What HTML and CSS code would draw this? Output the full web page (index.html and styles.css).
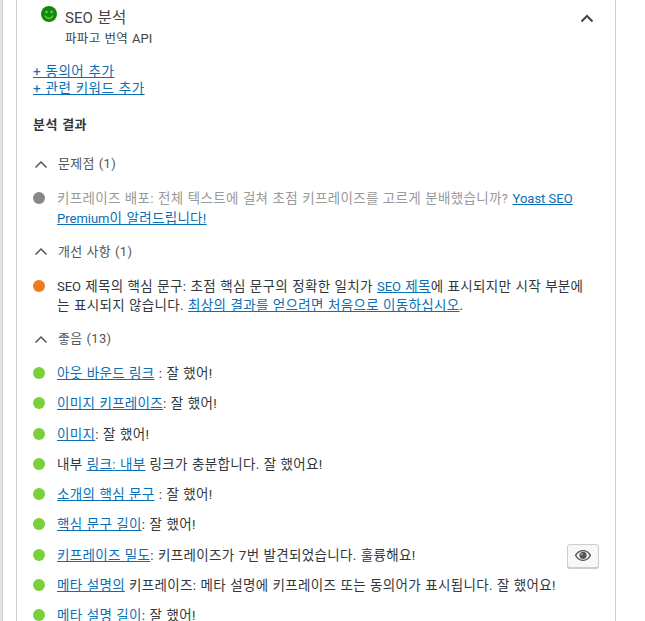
FILE: index.html
```html
<!DOCTYPE html>
<html lang="ko">
<head>
<meta charset="utf-8">
<title>SEO 분석</title>
<link rel="stylesheet" href="styles.css">
</head>
<body>
<div class="stripe"></div>
<main class="panel">
  <header class="head">
    <svg class="smile" viewBox="0 0 16 16" aria-hidden="true"><circle cx="8" cy="8" r="8" fill="#0f8a0f"/><circle cx="5.400" cy="6" r="1.200" fill="#7ad03a"/><circle cx="10.600" cy="6" r="1.200" fill="#7ad03a"/><path d="M4 9.400c1 2 2.400 2.900 4 2.900s3-.9 4-2.900" fill="none" stroke="#7ad03a" stroke-width="1.200"/></svg>
    <div class="titles">
      <h2 class="title"><span class="lat">SEO</span> 분석</h2>
      <div class="sub">파파고 번역 <span class="lat">API</span></div>
    </div>
    <svg class="chev big" viewBox="0 0 14 9" aria-hidden="true"><path d="M1.500 7.500 7 2l5.500 5.500" fill="none" stroke="#444" stroke-width="2"/></svg>
  </header>
  <div class="adds">
    <a href="#">+ 동의어 추가</a>
    <a href="#">+ 관련 키워드 추가</a>
  </div>
  <h3 class="results">분석 결과</h3>

  <div class="group first"><svg class="chev" viewBox="0 0 14 9" aria-hidden="true"><path d="M1.500 7.500 7 2l5.500 5.500" fill="none" stroke="#555" stroke-width="1.500"/></svg><span>문제점 (1)</span></div>
  <ul class="list">
    <li class="item muted"><i class="dot grey"></i><p>키프레이즈 배포: 전체 텍스트에 걸쳐 초점 키프레이즈를 고르게 분배했습니까? <a href="#"><span class="lat">Yoast SEO Premium</span>이 알려드립니다!</a></p></li>
  </ul>

  <div class="group"><svg class="chev" viewBox="0 0 14 9" aria-hidden="true"><path d="M1.500 7.500 7 2l5.500 5.500" fill="none" stroke="#555" stroke-width="1.500"/></svg><span>개선 사항 (1)</span></div>
  <ul class="list">
    <li class="item"><i class="dot orange"></i><p><span class="lat">SEO</span> 제목의 핵심 문구: 초점 핵심 문구의 정확한 일치가 <a href="#"><span class="lat">SEO</span> 제목</a>에 표시되지만 시작 부분에는 표시되지 않습니다. <a href="#">최상의 결과를 얻으려면 처음으로 이동하십시오</a>.</p></li>
  </ul>

  <div class="group"><svg class="chev" viewBox="0 0 14 9" aria-hidden="true"><path d="M1.500 7.500 7 2l5.500 5.500" fill="none" stroke="#555" stroke-width="1.500"/></svg><span>좋음 (13)</span></div>
  <ul class="list">
    <li class="item"><i class="dot green"></i><p><a href="#">아웃 바운드 링크</a> : 잘 했어!</p></li>
    <li class="item"><i class="dot green"></i><p><a href="#">이미지 키프레이즈</a>: 잘 했어!</p></li>
    <li class="item"><i class="dot green"></i><p><a href="#">이미지</a>: 잘 했어!</p></li>
    <li class="item"><i class="dot green"></i><p>내부 <a href="#">링크: 내부</a> 링크가 충분합니다. 잘 했어요!</p></li>
    <li class="item"><i class="dot green"></i><p><a href="#">소개의 핵심 문구</a> : 잘 했어!</p></li>
    <li class="item"><i class="dot green"></i><p><a href="#">핵심 문구 길이</a>: 잘 했어!</p></li>
    <li class="item"><i class="dot green"></i><p><a href="#">키프레이즈 밀도</a>: 키프레이즈가 7번 발견되었습니다. 훌륭해요!</p>
      <button class="eye" type="button" aria-label="보기"><svg viewBox="0 0 20 14" aria-hidden="true"><path d="M10 1C5.800 1 2.500 3.700 1 7c1.500 3.300 4.800 6 9 6s7.500-2.700 9-6c-1.500-3.300-4.800-6-9-6z" fill="#555"/><path d="M10 2.300C6.800 2.300 4.100 4.200 2.700 7c1.400 2.800 4.100 4.700 7.300 4.700s5.900-1.900 7.300-4.700C15.900 4.200 13.200 2.300 10 2.300z" fill="#f7f7f7"/><circle cx="10" cy="6.800" r="4" fill="#555"/><circle cx="8.500" cy="5.300" r="1.300" fill="#999"/></svg></button></li>
    <li class="item"><i class="dot green"></i><p><a href="#">메타 설명의</a> 키프레이즈: 메타 설명에 키프레이즈 또는 동의어가 표시됩니다. 잘 했어요!</p></li>
    <li class="item"><i class="dot green"></i><p><a href="#">메타 설명 길이</a>: 잘 했어!</p></li>
  </ul>
</main>
</body>
</html>
```

FILE: styles.css
```css
* { box-sizing: border-box; }
html, body { margin: 0; height: 621px; overflow: hidden; background: #fff; }
body {
  font-family: Roboto, "Noto Sans CJK KR", sans-serif;
  font-size: 13.5px;
  letter-spacing: 0.32px;
  word-spacing: 0.5px;
  line-height: 19.500px;
  color: #32373c;
  display: flex;
  align-items: flex-start;
}
.stripe { width: 3px; height: 621px; background: #e5e5e5; border-right: 1px solid #ccc; flex: none; }
.panel {
  margin-left: 13px;
  width: 600px;
  height: 621px;
  overflow: hidden;
  flex: none;
  border-left: 1px solid #ccc;
  border-right: 1px solid #ccc;
  padding: 6px 16px 0;
}
a { color: #0a6fb5; text-decoration: underline; }
.lat { font-size: 13px; letter-spacing: 0; word-spacing: 0; }
.head { display: flex; align-items: flex-start; padding-left: 8px; }
.smile { width: 16px; height: 16px; flex: none; }
.titles { margin-left: 8px; flex: 1; }
.title { margin: 0; font-size: 15.500px; font-weight: 400; line-height: 24px; color: #444; }
.title .lat { font-size: 15px; }
.sub { font-size: 12.500px; line-height: 16px; color: #444; margin-top: 1px; }
.chev { width: 14px; height: 9px; flex: none; }
.chev.big { margin: 8px 5px 0 0; }
.adds { margin-top: 16px; display: flex; flex-direction: column; align-items: flex-start; line-height: 17px; letter-spacing: 0.5px; }
.results { margin: 18px 0 0; font-size: 13px; font-weight: 700; line-height: 20px; color: #32373c; letter-spacing: 0.5px; }
.group { display: flex; align-items: center; gap: 10px; margin-top: 13.500px; height: 20px; color: #555; padding-left: 1px; font-size: 13px; letter-spacing: 0.300px; }
.group.first { margin-top: 19px; }
.list { list-style: none; margin: 15px 0 0; padding: 0; }
.item { display: flex; align-items: flex-start; position: relative; margin-bottom: 10.800px; }
.item p { margin: 0; flex: 1; padding-right: 10px; }
.muted { color: #999; }
.dot { width: 12px; height: 12px; border-radius: 50%; flex: none; margin: 3px 12px 0 0; }
.grey { background: #888; }
.orange { background: #ee7c1b; }
.green { background: #7ad03a; }
.eye {
  position: absolute;
  right: 0;
  top: -2px;
  width: 32px;
  height: 24px;
  padding: 0;
  background: #f7f7f7;
  border: 1px solid #ccc;
  border-radius: 3px;
  box-shadow: 0 1px 0 #ccc;
  display: flex;
  align-items: center;
  justify-content: center;
}
.eye svg { width: 18px; height: 13px; }
```
